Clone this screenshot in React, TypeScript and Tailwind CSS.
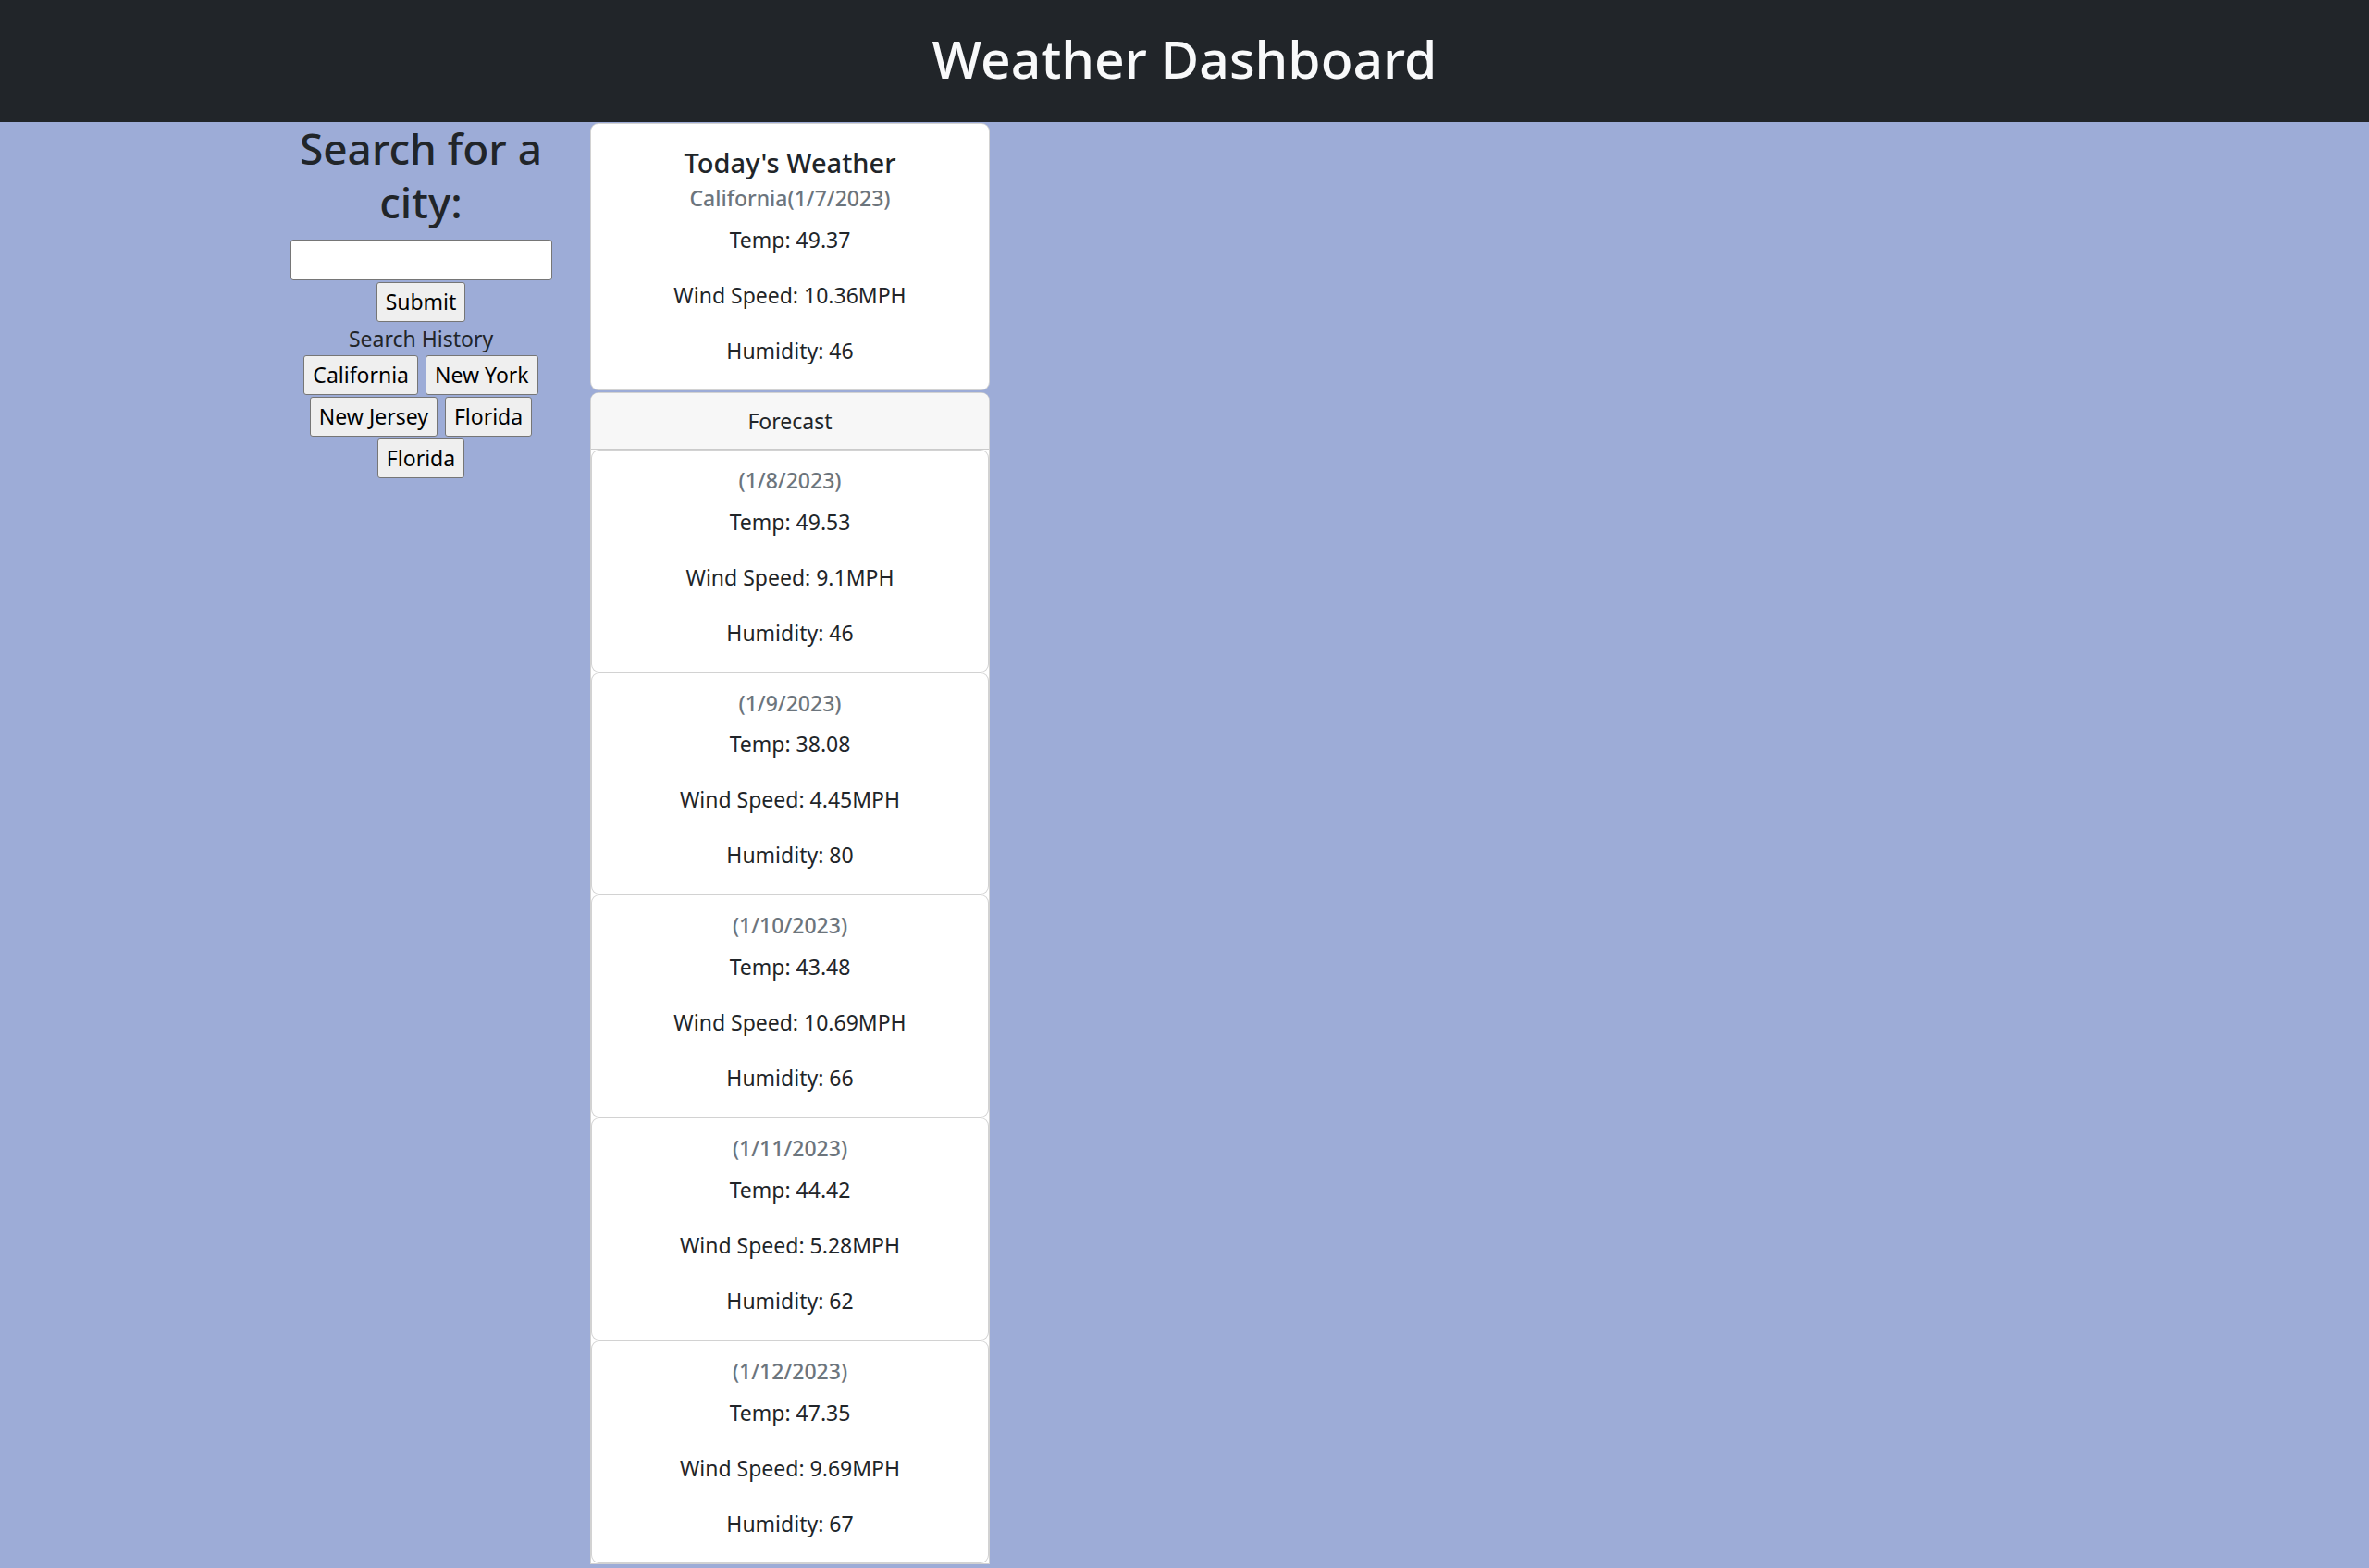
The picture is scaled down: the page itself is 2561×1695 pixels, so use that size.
import React from 'react';

type Day = {
  date: string,
  temp: string,
  wind: string,
  humidity: string
};

const forecast: Day[] = [
  { date: '(1/8/2023)', temp: '49.53', wind: '9.1', humidity: '46' },
  { date: '(1/9/2023)', temp: '38.08', wind: '4.45', humidity: '80' },
  { date: '(1/10/2023)', temp: '43.48', wind: '10.69', humidity: '66' },
  { date: '(1/11/2023)', temp: '44.42', wind: '5.28', humidity: '62' },
  { date: '(1/12/2023)', temp: '47.35', wind: '9.69', humidity: '67' }
];

const history = ['California', 'New York', 'New Jersey', 'Florida', 'Florida'];

const btn = `
  h-[43px] px-[9px]
  bg-[#efefef] border border-[#767676] rounded-[3px]
  text-[23px] leading-none text-black
`;

const Stats = ({ temp, wind, humidity }: { temp: string, wind: string, humidity: string }) => (
  <>
    <p className="leading-[36px] mb-6">Temp: {temp}</p>
    <p className="leading-[36px] mb-6">Wind Speed: {wind}MPH</p>
    <p className="leading-[36px]">Humidity: {humidity}</p>
  </>
);

const ForecastCard = ({ day }: { day: Day }) => (
  <div
    className="bg-white border border-black/[0.175] rounded-[9px] p-6 text-center"
  >
    <h6
      className="-mt-[6px] mb-3 text-[23px] leading-[28.8px] font-medium text-[#6c757d]"
    >
      {day.date}
    </h6>
    <Stats temp={day.temp} wind={day.wind} humidity={day.humidity} />
  </div>
);

export default function App() {
  return (
    <div
      className="min-h-screen bg-[#9dacd7] text-[#212529] text-[23px] font-['Noto_Sans','Open_Sans',sans-serif]"
    >
      <header
        className="h-[132px] bg-[#212529] text-center"
      >
        <h1
          className="pt-[27px] text-[57px] leading-[72px] font-medium text-[#f8f9fa]"
        >
          Weather Dashboard
        </h1>
      </header>
      <main
        className="flex pl-[290px]"
      >
        <section
          className="w-[330px] px-[18px] flex flex-col items-center text-center"
        >
          <h2
            className="mb-3 text-[46px] leading-[57.6px] font-medium"
          >
            Search for a city:
          </h2>
          <input
            type="text"
            className="block w-[283px] h-[44px] px-1 bg-white border border-[#767676] rounded-[3px]"
          />
          <button
            className={`mt-[2px] ${btn}`}
          >
            Submit
          </button>
          <p
            className="leading-[36px]"
          >
            Search History
          </p>
          <div
            className="flex flex-wrap justify-center gap-x-2 gap-y-[2px]"
          >
            {history.map((city, index) =>
              <button
                key={index}
                className={btn}
              >
                {city}
              </button>
            )}
          </div>
        </section>
        <section
          className="w-[468px] px-[18px] pt-px"
        >
          <div
            className="bg-white border border-black/[0.175] rounded-[9px] p-6 text-center"
          >
            <h5
              className="mb-3 text-[29px] leading-[36px] font-medium"
            >
              Today's Weather
            </h5>
            <h6
              className="-mt-[6px] mb-3 text-[23px] leading-[28.8px] font-medium text-[#6c757d]"
            >
              California(1/7/2023)
            </h6>
            <Stats temp="49.37" wind="10.36" humidity="46" />
          </div>
          <div
            className="mt-[2px] bg-white border border-black/[0.175] rounded-t-[9px]"
          >
            <div
              className="px-6 py-3 bg-[#f7f7f7] border-b border-black/[0.175] rounded-t-[8px] text-center leading-[36px]"
            >
              Forecast
            </div>
            {forecast.map((day) =>
              <ForecastCard
                key={day.date}
                day={day}
              />
            )}
          </div>
        </section>
      </main>
    </div>
  );
}
